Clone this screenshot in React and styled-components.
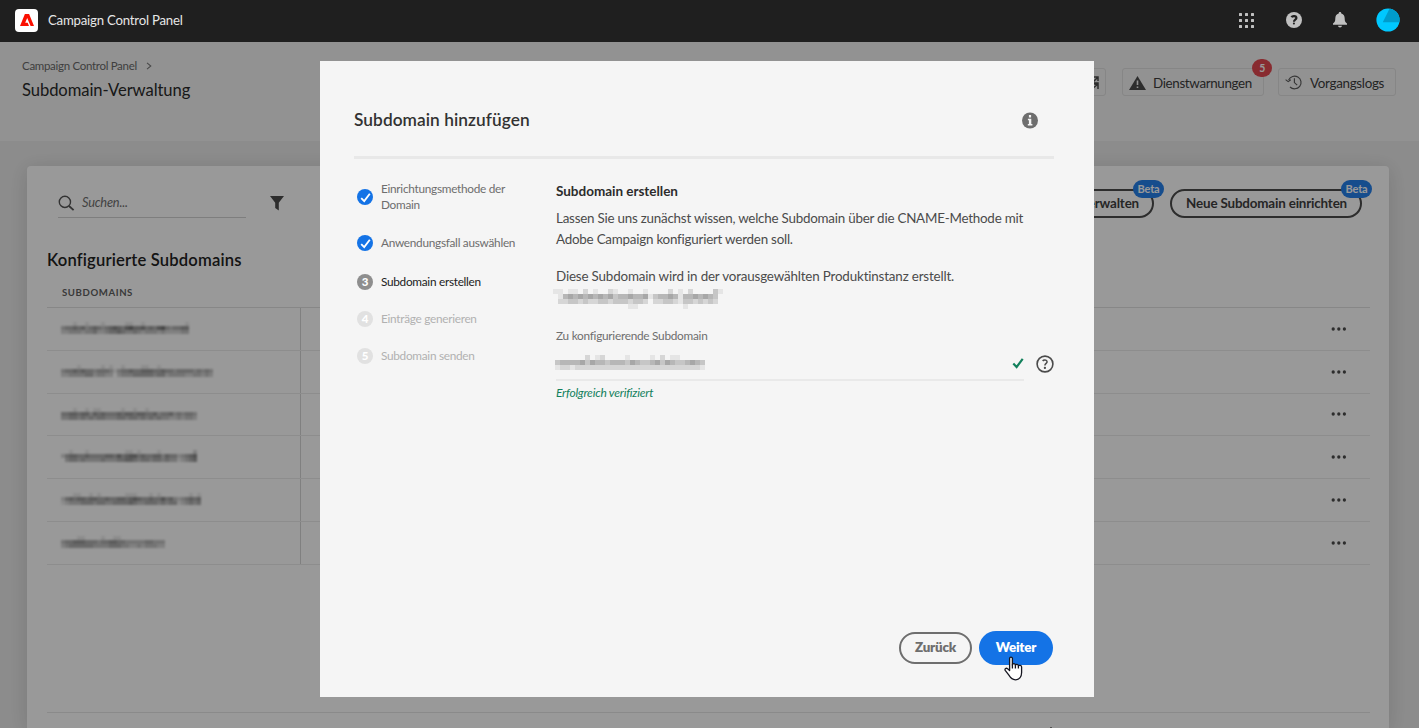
import React from 'react';
import styled, { createGlobalStyle } from 'styled-components';

const GlobalStyle = createGlobalStyle`
  * { box-sizing: border-box; }
  body { margin: 0; overflow: hidden; font-family: Lato, "Open Sans", sans-serif; color: #2c2c2c; }
  svg { display: block; flex: none; }
`;

const Shell = styled.div`
  height: 100vh; display: flex; flex-direction: column; overflow: hidden; background: #eaeaea;
`;

/* ---------- top bar ---------- */
const TopBar = styled.header`
  height: 42px; flex: none; background: #1f1f1f; display: flex; align-items: center;
  padding: 0 19px 2px 15px; position: relative; z-index: 3;
`;
const Logo = styled.div`
  width: 23px; height: 23px; border-radius: 4px; background: #fff; display: grid; place-items: center;
`;
const Product = styled.span`
  margin-left: 10px; font-size: 13.2px; letter-spacing: -0.21px; line-height: 20px; color: #e6e6e6; white-space: nowrap;
`;
const TopActions = styled.div`
  margin-left: auto; display: flex; align-items: center; color: #c0c0c0;
`;
const TopAction = styled.div`
  margin-right: ${p => p.$gap}px;
`;

/* ---------- page heading ---------- */
const PageHead = styled.section`
  height: 99px; flex: none; background: #f4f4f4; padding: 15px 23px 0 22px; display: flex; justify-content: space-between;
`;
const Crumb = styled.div`
  display: flex; align-items: center; gap: 9px; font-size: 11.5px; letter-spacing: -0.3px; line-height: 18px; color: #6a6a6a; white-space: nowrap;
`;
const PageTitle = styled.h1`
  margin: 5px 0 0; font-size: 16.6px; letter-spacing: -0.08px; line-height: 20px; font-weight: 400; color: #2a2a2a; white-space: nowrap;
`;
const HeadButtons = styled.div`
  display: flex; align-items: flex-start; padding-top: 11px;
`;
const HeadButton = styled.div`
  position: relative; height: 28px; width: ${p => p.$w}px; margin-left: ${p => p.$ml}px; border: 1px solid #dfdfdf; border-radius: 3px;
  display: flex; align-items: center; justify-content: ${p => p.$end ? 'flex-end' : 'flex-start'}; gap: 7px; padding: 1px 6px 0;
  font-size: 13.4px; letter-spacing: ${p => p.$ls || -0.15}px; color: #3c3c3c; white-space: nowrap;
`;
const AlertBadge = styled.span`
  position: absolute; top: -10px; right: -9px; width: 20px; height: 18px; border-radius: 10px; background: #e34850;
  color: #fff; font-size: 10.5px; font-weight: 700; line-height: 18px; text-align: center;
`;

/* ---------- card ---------- */
const Card = styled.main`
  margin: 25px 30px 0 27px; flex: 1; background: #fff; border-radius: 4px 4px 0 0; padding: 0 19px 0 20px;
  box-shadow: 0 3px 20px rgba(0,0,0,0.14); display: flex; flex-direction: column; min-height: 0;
`;
const Toolbar = styled.div`
  display: flex; align-items: flex-start; padding: 22px 8px 0 11px;
`;
const Search = styled.div`
  width: 188px; height: 30px; border-bottom: 1px solid #d3d3d3; display: flex; align-items: center; gap: 7px;
  font-size: 12.8px; font-style: italic; letter-spacing: -0.2px; color: #6f6f6f;
`;
const SearchHint = styled.span`
  padding-bottom: 2px;
`;
const FilterSlot = styled.div`
  margin: 8px 0 0 24px;
`;
const ToolbarButtons = styled.div`
  margin-left: auto; display: flex; gap: 16px;
`;
const PillButton = styled.div`
  position: relative; width: ${p => p.$w}px; height: 29px; margin-top: 1px; border: 2px solid #4b4b4b; border-radius: 15px;
  display: flex; align-items: center; justify-content: flex-end; padding: 0 13px 1px;
  font-size: 13.4px; font-weight: 700; letter-spacing: -0.17px; color: #3f3f3f; white-space: nowrap;
`;
const BetaTag = styled.span`
  position: absolute; top: -11px; right: -12px; width: 31px; height: 18px; border-radius: 9px; background: #2680eb; color: #fff;
  font-size: 11px; letter-spacing: -0.2px; line-height: 17px; text-align: center;
`;
const TableTitle = styled.h2`
  margin: 31px 0 0; font-size: 16.6px; line-height: 22px; font-weight: 600; letter-spacing: 0.17px; color: #222;
`;
const Table = styled.div`
  display: flex; flex-direction: column;
`;
const TableHead = styled.div`
  height: 37px; padding: 15px 0 0 15px; font-size: 9.6px; line-height: 14px; font-weight: 700; letter-spacing: 0.6px; color: #5f5f5f;
  border-bottom: 1px solid #e2e2e2;
`;
const TableRow = styled.div`
  height: 42.75px; display: flex; border-bottom: 1px solid #ececec;
`;
const NameCell = styled.div`
  width: 254px; flex: none; border-right: 1px solid #d5d5d5; padding: 14px 0 0 14px;
`;
const ActionCell = styled.div`
  flex: 1; display: flex; align-items: center; justify-content: flex-end; padding-right: 23px; color: #4b4b4b;
`;
const CardFooter = styled.div`
  margin-top: auto; height: 16px; flex: none; border-top: 1px solid #e6e6e6; display: flex; justify-content: flex-end; padding: 13px 315px 0 0; overflow: hidden;
`;

/* ---------- dialog ---------- */
const Backdrop = styled.div`
  position: fixed; inset: 42px 0 0 0; z-index: 2; background: rgba(0,0,0,0.4); display: flex; justify-content: center; align-items: flex-start;
  padding: 19px 5px 0 0;
`;
const Dialog = styled.section`
  width: 774px; height: 636px; background: #f5f5f5; padding: 0 40px 32px 34px; display: flex; flex-direction: column;
`;
const DialogHead = styled.div`
  height: 98px; flex: none; border-bottom: 3px solid #e8e8e8; display: flex; justify-content: space-between; padding: 47px 16px 0 0; color: #707070;
`;
const DialogTitle = styled.h2`
  margin: 0; font-size: 17.3px; line-height: 24px; font-weight: 600; letter-spacing: 0.06px; color: #323232; white-space: nowrap;
`;
const InfoSlot = styled.div`
  padding-top: 4px;
`;
const DialogBody = styled.div`
  display: flex; flex: 1;
`;
const Steps = styled.ol`
  list-style: none; margin: 0; padding: 22px 0 0 3px; width: 202px; flex: none; display: flex; flex-direction: column;
`;
const Step = styled.li`
  display: flex; align-items: center; gap: 8px; margin-bottom: ${p => p.$mb || 21}px;
  font-size: 11.8px; line-height: 16px; letter-spacing: -0.28px;
  color: ${p => p.$state === 'current' ? '#222' : p.$state === 'done' ? '#6e6e6e' : '#b1b1b1'};
`;
const StepDot = styled.span`
  width: 16px; height: 16px; flex: none; border-radius: 50%; display: grid; place-items: center; color: #fff; font-size: 11.5px; font-weight: 900; line-height: 16px;
  background: ${p => p.$state === 'done' ? '#1473e6' : p.$state === 'current' ? '#8e8e8e' : '#e1e1e1'};
`;
const StepLabel = styled.span`
  width: 140px; margin: -0.4px 0 0.4px;
`;
const Form = styled.div`
  flex: 1; padding-top: 22px;
`;
const FormTitle = styled.h3`
  margin: 0; font-size: 13.5px; line-height: 20px; font-weight: 700; letter-spacing: -0.02px; color: #2c2c2c;
`;
const Copy = styled.p`
  margin: ${p => p.$mt}px 0 0; font-size: 13.4px; line-height: 21px; letter-spacing: ${p => p.$ls || -0.23}px; color: #4b4b4b; white-space: nowrap;
`;
const InstanceName = styled.div`
  padding-top: 2px;
`;
const Label = styled.div`
  margin-top: 19px; font-size: 11.8px; line-height: 16px; letter-spacing: -0.26px; color: #6e6e6e;
`;
const FieldRow = styled.div`
  display: flex; align-items: center; gap: 12px;
`;
const Field = styled.div`
  width: 468px; height: 37px; border-bottom: 2px solid #e9e9e9; display: flex; align-items: center; justify-content: space-between; padding-top: 2px; color: #12805c;
`;
const Valid = styled.div`
  margin-top: 4px; font-size: 12px; line-height: 16px; font-style: italic; letter-spacing: -0.22px; color: #12805c;
`;
const HelpSlot = styled.div`
  padding-top: 3px;
`;
const DialogFooter = styled.div`
  display: flex; justify-content: flex-end; align-items: center; gap: 7px; padding-right: 1px;
`;
const DialogButton = styled.button`
  height: ${p => p.$primary ? 34 : 32}px; width: ${p => p.$primary ? 74 : 73}px; border-radius: 17px; padding: 0 0 2px;
  border: ${p => p.$primary ? '0' : '2px solid #6e6e6e'}; background: ${p => p.$primary ? '#1473e6' : 'transparent'};
  color: ${p => p.$primary ? '#fff' : '#6e6e6e'}; font: 800 13.4px Lato, sans-serif; letter-spacing: -0.2px; position: relative;
`;
const Pointer = styled.span`
  position: absolute; left: 25px; top: 25px;
`;
const Mosaic = styled.svg`
  margin-left: ${p => p.$ml || 0}px; filter: ${p => p.$soft ? 'blur(0.9px)' : 'none'};
`;

/* Obscured host names: each string is a strip of cells, 0 (clear) to 9 (solid). */
function Obscured({ rows, cell, color, ml, soft }) {
  return (
    <Mosaic $ml={ml} $soft={soft} width={rows[0].length * cell} height={rows.length * cell} shapeRendering="crispEdges" aria-hidden="true">
      {rows.flatMap((r, y) => [...r].map((c, x) => c !== '0' && (
        <rect key={`${x}-${y}`} x={x * cell} y={y * cell} width={cell} height={cell} fill={color} opacity={Number(c) / 10} />
      )))}
    </Mosaic>
  );
}

const INSTANCE = [
  '1101102010021001001000020102000031',
  '0145454545453445445134454144545430',
  '0223323223323332332022332133232320',
  '0000000000000001100000000010000000',
];
const DOMAIN = [
  '000000201200001000010201100000',
  '344445354434443543345354334543',
  '122122222222222222222222222221',
];
const HOSTS = [
  ['00010010001000001100100000000001', '34454534543456546755645467434455', '22333233422344543343233323222233'],
  ['00001000001010010000110010000000000000', '34454544344431344544555445443444434343', '22333344233220233344444344233332233232'],
  ['0001001011000001001001000000000000', '4455455354544454554554453445343443', '3344343434433344344343434332232332'],
  ['0010001000000000110100001000000002', '2455445444455464566454455354423456', '0344343333433344554344344343312345'],
  ['00011001010000001110001010000000101', '24545545544544554565445446453234545', '12333444344334444543344434344123434'],
  ['00001100001001100000000000', '34455544434455443333344333', '23444444333344433223233322'],
];

const Dots = () => (
  <svg width="16" height="6" viewBox="0 0 16 6" fill="currentColor"><circle cx="2.2" cy="3" r="1.65" /><circle cx="7.8" cy="3" r="1.65" /><circle cx="13.4" cy="3" r="1.65" /></svg>
);
const Tick = ({ size = 12, w = 2.2 }) => (
  <svg width={size} height={size} viewBox="0 0 12 12" fill="none" stroke="currentColor" strokeWidth={w}><path d="M1.3 6.6 4.6 10 10.7 1.9" /></svg>
);
const Help = ({ filled }) => (
  <svg width={filled ? 16 : 18} height={filled ? 16 : 18} viewBox="0 0 18 18">
    <circle cx="9" cy="9" r={filled ? 9 : 7.9} fill={filled ? 'currentColor' : 'none'} stroke={filled ? 'none' : '#4b4b4b'} strokeWidth="1.6" />
    <path d={filled ? 'M6.2 5.9C7 4.2 11.6 4 11.7 6.8C11.8 8.7 9 8.7 9 11' : 'M6.7 6C7.4 4.8 10.9 4.4 11.1 6.7C11.2 8.3 8.9 8.4 8.9 10.6'} fill="none" stroke={filled ? '#1f1f1f' : '#4b4b4b'} strokeWidth={filled ? 2.5 : 1.5} />
    <rect x="7.8" y="11.8" width="2.2" height="2.2" rx=".9" fill={filled ? '#1f1f1f' : '#4b4b4b'} />
  </svg>
);

export default function App() {
  return (
    <Shell>
      <GlobalStyle />
      <TopBar>
        <Logo>
          <svg width="14" height="12" viewBox="0 0 14 12" fill="#fa0f00"><path d="M4.9 0H9.1L14 12H10.6L7.2 3.9 5.2 8.7H7.7L9 12H0Z" /></svg>
        </Logo>
        <Product>Campaign Control Panel</Product>
        <TopActions>
          <TopAction $gap={32}>
            <svg width="15" height="15" viewBox="0 0 15 15" fill="currentColor">
              {[0, 6, 12].flatMap(y => [0, 6, 12].map(x => <rect key={`${x}${y}`} x={x} y={y} width="3" height="3" rx=".5" />))}
            </svg>
          </TopAction>
          <TopAction $gap={31}><Help filled /></TopAction>
          <TopAction $gap={29}>
            <svg width="14" height="16" viewBox="0 0 14 16" fill="currentColor"><path d="M7 0C8 0 8.3.7 8.3 1.5C10.7 2.1 11.7 4 11.7 6.5C11.7 9.2 12.2 10 14 11.6V12.8H0V11.6C1.8 10 2.3 9.2 2.3 6.5C2.3 4 3.3 2.1 5.7 1.5C5.7.7 6 0 7 0ZM5 13.8H9C8.8 15 8 15.5 7 15.5S5.2 15 5 13.8Z" /></svg>
          </TopAction>
          <svg width="24" height="24" viewBox="0 0 24 24">
            <defs><clipPath id="av"><circle cx="12" cy="12" r="11.6" /></clipPath></defs>
            <g clipPath="url(#av)"><rect width="24" height="24" fill="#00c8ff" /><path d="M12.6 2.5 6.8 14.2H24V0H14Z" fill="#009ccc" /></g>
          </svg>
        </TopActions>
      </TopBar>

      <PageHead>
        <div>
          <Crumb>
            Campaign Control Panel
            <svg width="6" height="8" viewBox="0 0 6 8" fill="none" stroke="#7a7a7a" strokeWidth="1.1"><path d="M1 .8 4.8 4 1 7.2" /></svg>
          </Crumb>
          <PageTitle>Subdomain-Verwaltung</PageTitle>
        </div>
        <HeadButtons>
          <HeadButton $w={60} $ml={0} $end>
            <svg width="14" height="14" viewBox="0 0 14 14" fill="none" stroke="#4b4b4b" strokeWidth="1.5"><path d="M1 1H13V5M13 1 8 6 4 3M7 7 13 9M7 13 13 8M8 7H13V13" /></svg>
          </HeadButton>
          <HeadButton $w={142} $ml={16} $ls={-0.35}>
            <svg width="17" height="14" viewBox="0 0 17 14"><path d="M8.5 0 17 14H0Z" fill="#4b4b4b" /><path d="M8.5 4.4V9M8.5 10.4V12" stroke="#f4f4f4" strokeWidth="1.6" /></svg>
            Dienstwarnungen
            <AlertBadge>5</AlertBadge>
          </HeadButton>
          <HeadButton $w={118} $ml={14} $ls={-0.3}>
            <svg width="18" height="15" viewBox="0 0 18 15" fill="none" stroke="#5a5a5a" strokeWidth="1.15"><path d="M3.6 5A6.5 6.3 0 1 1 5 12M.6 4.6 3.2 6.6 5.8 4.8M9.4 3.2V7.6L12.2 10.2" /></svg>
            Vorgangslogs
          </HeadButton>
        </HeadButtons>
      </PageHead>

      <Card>
        <Toolbar>
          <Search>
            <svg width="17" height="16" viewBox="0 0 17 16" fill="none" stroke="#555" strokeWidth="1.4"><circle cx="6.9" cy="6.9" r="5.6" /><path d="M11 11 15.6 15.2" strokeWidth="1.8" /></svg>
            <SearchHint>Suchen...</SearchHint>
          </Search>
          <FilterSlot>
            <svg width="14" height="15" viewBox="0 0 14 15" fill="#4b4b4b"><path d="M0 0H14L8.8 6.7V14.4L5.2 12V6.7Z" /></svg>
          </FilterSlot>
          <ToolbarButtons>
            <PillButton $w={190}>Subdomains verwalten<BetaTag>Beta</BetaTag></PillButton>
            <PillButton $w={192}>Neue Subdomain einrichten<BetaTag>Beta</BetaTag></PillButton>
          </ToolbarButtons>
        </Toolbar>
        <TableTitle>Konfigurierte Subdomains</TableTitle>
        <Table>
          <TableHead>SUBDOMAINS</TableHead>
          {HOSTS.map((rows, i) => (
            <TableRow key={i}>
              <NameCell><Obscured rows={rows} cell={4} color="#383838" soft /></NameCell>
              <ActionCell><Dots /></ActionCell>
            </TableRow>
          ))}
        </Table>
        <CardFooter>
          <svg width="8" height="5" viewBox="0 0 8 5" fill="none" stroke="#222" strokeWidth="1.5"><path d="M1 5 4 2 7 5" /></svg>
        </CardFooter>
      </Card>

      <Backdrop>
        <Dialog>
          <DialogHead>
            <DialogTitle>Subdomain hinzufügen</DialogTitle>
            <InfoSlot>
              <svg width="16" height="17" viewBox="0 -0.5 16 17"><circle cx="8" cy="8" r="8" fill="#6e6e6e" /><path d="M6.9 2.6H9.1V4.9H6.9ZM5.9 6.2H9.3V11.5H10.4V13H5.8V11.5H6.9V7.7H5.9Z" fill="#f5f5f5" /></svg>
            </InfoSlot>
          </DialogHead>
          <DialogBody>
            <Steps>
              <Step $state="done" $mb={22}><StepDot $state="done"><Tick size={11} w={2} /></StepDot><StepLabel>Einrichtungsmethode der Domain</StepLabel></Step>
              <Step $state="done" $mb={23}><StepDot $state="done"><Tick size={11} w={2} /></StepDot><StepLabel>Anwendungsfall auswählen</StepLabel></Step>
              <Step $state="current"><StepDot $state="current">3</StepDot><StepLabel>Subdomain erstellen</StepLabel></Step>
              <Step $state="next"><StepDot $state="next">4</StepDot><StepLabel>Einträge generieren</StepLabel></Step>
              <Step $state="next"><StepDot $state="next">5</StepDot><StepLabel>Subdomain senden</StepLabel></Step>
            </Steps>
            <Form>
              <FormTitle>Subdomain erstellen</FormTitle>
              <Copy $mt={7}>Lassen Sie uns zunächst wissen, welche Subdomain über die CNAME-Methode mit<br />Adobe Campaign konfiguriert werden soll.</Copy>
              <Copy $mt={16} $ls={-0.17}>Diese Subdomain wird in der vorausgewählten Produktinstanz erstellt.</Copy>
              <InstanceName><Obscured rows={INSTANCE} cell={5} color="#5a5a5a" ml={-3} /></InstanceName>
              <Label>Zu konfigurierende Subdomain</Label>
              <FieldRow>
                <Field><Obscured rows={DOMAIN} cell={5} color="#5a5a5a" ml={-1} /><Tick /></Field>
                <HelpSlot><Help /></HelpSlot>
              </FieldRow>
              <Valid>Erfolgreich verifiziert</Valid>
            </Form>
          </DialogBody>
          <DialogFooter>
            <DialogButton>Zurück</DialogButton>
            <DialogButton $primary>
              Weiter
              <Pointer>
                <svg width="19" height="25" viewBox="0 0 19 25" fill="#fff" stroke="#15151f" strokeWidth="1.3" strokeLinejoin="round">
                  <path d="M5.6 14.5V2.6C5.6.6 8.4.6 8.4 2.6V9C8.6 7 11.4 7.4 11.4 9.3C11.8 7.8 14.4 8.2 14.4 10C15 8.8 17.6 9.2 17.6 11V16.5C17.6 21 15 23.8 11.4 23.8C8.2 23.8 6.6 22 4.9 19.2L1.2 14.4C.4 12.7 2.2 11.6 3.6 12.8Z" />
                  <path d="M8.4 8.5V12.6M11.4 9.3V12.6M14.4 10V12.6" />
                </svg>
              </Pointer>
            </DialogButton>
          </DialogFooter>
        </Dialog>
      </Backdrop>
    </Shell>
  );
}
